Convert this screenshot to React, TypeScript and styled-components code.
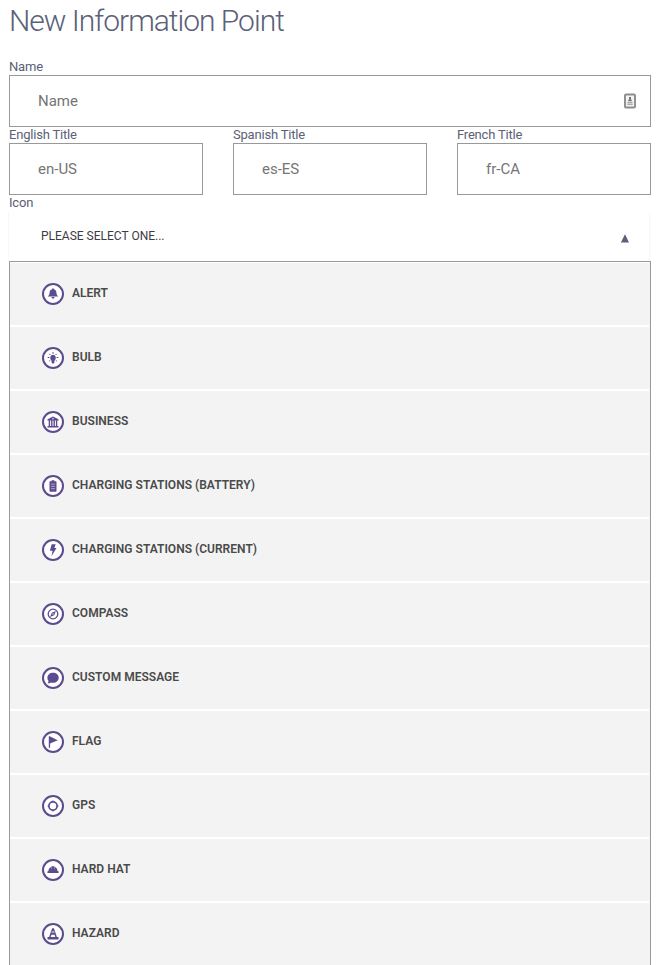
import React from "react";
import styled, { createGlobalStyle } from "styled-components";

const GlobalStyle = createGlobalStyle`
  * { box-sizing: border-box; }
  html, body { margin: 0; background: #fff; overflow: hidden; }
  body { font-family: Roboto, "Liberation Sans", sans-serif; color: #5a6178; }
`;

const Page = styled.main`
  width: 662px;
  height: 965px;
  padding: 0 11px 0 9px;
  overflow: hidden;
`;
const Title = styled.h1`
  margin: 0;
  height: 59px;
  padding-top: 2px;
  font-size: 30px;
  line-height: 38px;
  font-weight: 300;
  letter-spacing: -1px;
  white-space: nowrap;
`;
const Field = styled.label`
  display: block;
  min-width: 0;
`;
const Label = styled.span`
  display: block;
  height: 16px;
  font-size: 13px;
  line-height: 16px;
  letter-spacing: -0.2px;
`;
const InputBox = styled.span`
  display: flex;
  align-items: center;
  height: 52px;
  padding: 0 14px 0 28px;
  border: 1px solid #999;
  background: #fff;
`;
const Input = styled.input`
  flex: 1;
  min-width: 0;
  padding: 0;
  border: 0;
  outline: 0;
  background: transparent;
  font: 400 15px/20px Roboto, sans-serif;
  &::placeholder { color: #757575; opacity: 1; }
`;
const TitleGrid = styled.div`
  display: grid;
  grid-template-columns: repeat(3, 194px);
  column-gap: 30px;
`;
const SelectHeader = styled.div`
  display: flex;
  align-items: center;
  justify-content: space-between;
  height: 50px;
  width: 640px;
  padding: 0 20px 0 32px;
  box-shadow: 0 1px 2px rgba(0, 0, 0, 0.1);
  font-size: 12px;
  color: #3c3c44;
`;
const Arrow = styled.svg`
  display: block;
  margin-top: 5px;
`;
const Options = styled.ul`
  position: relative;
  margin: 0;
  padding: 0 1px 0 0;
  list-style: none;
  border: 1px solid #999;
  background: #f3f3f3;
`;
const Option = styled.li`
  display: flex;
  align-items: center;
  gap: 8px;
  height: 64px;
  padding-left: 32px;
  border-top: 1px solid #fff;
  border-bottom: 1px solid #fff;
  font-size: 12px;
  line-height: 16px;
  font-weight: 600;
  letter-spacing: 0.02px;
  color: #4a4a4a;
`;
const Badge = styled.svg`
  display: block;
  flex: none;
`;
const OptionText = styled.span`
  margin-top: -2px;
`;

const P = "#5c4b8f";
const W = "#fff";

const icons: Record<string, React.ReactNode> = {
  alert: <path fill={P} d="M11 5.3c.6 0 .9.4.9.9 1.700.4 2.400 1.600 2.500 3.300.1 2 .5 2.900 2 4H5.600c1.500-1.100 1.900-2 2-4 .1-1.700.8-2.900 2.500-3.300 0-.5.3-.9.9-.9zM9.500 14.100h3c-.1 1.100-.7 1.700-1.500 1.700s-1.400-.6-1.500-1.700z" />,
  bulb: (
    <>
      <path fill={P} d="M11 7.800a2.900 2.900 0 0 1 1.800 5.100l-.4 1.300H9.600l-.4-1.300A2.900 2.900 0 0 1 11 7.800zM9.600 14.300h2.800v1.500l-.8.800h-1.200l-.8-.8z" />
      <path stroke={P} strokeWidth="1" d="M11 5v1.800M7.300 6.800l1.200 1.200M14.700 6.800l-1.200 1.200M5.700 10.500h1.700M14.600 10.500h1.700M7.200 14.200l1.200-1.200M14.800 14.200l-1.200-1.200" />
    </>
  ),
  business: (
    <>
      <path fill={P} d="M5.500 9.500V8.200L11 5.400l5.500 2.800v1.300zM5.500 15h11v1.600h-11z" />
      <path stroke={P} strokeWidth="1.400" d="M7.400 9v6.200M9.800 9v6.200M12.200 9v6.200M14.600 9v6.200" />
      <circle cx="11" cy="7.700" r=".7" fill={W} />
    </>
  ),
  battery: (
    <>
      <path fill={P} d="M9.600 5.300h2.800v1h1.300q.8 0 .8.800v8.800q0 .8-.8.8H8.300q-.8 0-.8-.8V7.100q0-.8.8-.8h1.300z" />
      <path stroke="#d8d3e6" strokeWidth=".7" d="M9.100 9.100h3.800M9.100 11.400h3.800M9.100 13.700h3.800" />
    </>
  ),
  current: <path fill={P} d="M9.700 5.200h4l-1.400 3.900h2.200L9.500 17.200l1.100-5.500H7.900z" />,
  compass: (
    <>
      <circle cx="11" cy="11" r="4.800" fill="none" stroke={P} strokeWidth="1.300" />
      <path fill={P} d="M13.900 8.100l-1.700 4.100-4.100 1.700 1.700-4.100z" />
      <circle cx="11" cy="11" r=".65" fill={W} />
    </>
  ),
  message: <path fill={P} d="M11.100 5.700c3.300 0 5.600 2.100 5.600 5s-2.300 5-5.600 5c-.8 0-1.500-.1-2.100-.3-1 .7-2.100 1-3.600.9.9-.7 1.200-1.400 1.100-2.200-.7-.9-1.100-2-1.100-3.400 0-2.900 2.400-5 5.700-5z" />,
  flag: <path fill={P} d="M6.800 5.300h.8l8.200 3.900-7.700 3.400v4.100H6.800z" />,
  gps: (
    <>
      <circle cx="11" cy="11" r="4.100" fill="none" stroke={P} strokeWidth="1.700" />
      <path stroke={P} strokeWidth="1.200" d="M11 5.500v1.600M11 14.900v1.600M5.500 11h1.600M14.900 11h1.600" />
    </>
  ),
  hat: (
    <>
      <path fill={P} d="M6.400 12c.1-2.100 1.100-3.500 2.900-4.100l.5-.7h2.400l.5.700c1.800.6 2.800 2 2.900 4.100l1 .6V14H5.400v-1.400z" />
      <path stroke="#d8d3e6" strokeWidth=".4" d="M9.500 8v2.300M12.500 8v2.300" />
    </>
  ),
  hazard: (
    <>
      <path fill={P} d="M10.100 5.300h1.800l3 8.800h1.600v2.300h-11v-2.300h1.600z" />
      <path stroke={W} strokeWidth="1" d="M9.700 9h2.600" />
      <path fill={W} d="M9.400 11.700h3.200l.7 2.400H8.700z" />
    </>
  ),
};

const options = [
  ["alert", "ALERT"],
  ["bulb", "BULB"],
  ["business", "BUSINESS"],
  ["battery", "CHARGING STATIONS (BATTERY)"],
  ["current", "CHARGING STATIONS (CURRENT)"],
  ["compass", "COMPASS"],
  ["message", "CUSTOM MESSAGE"],
  ["flag", "FLAG"],
  ["gps", "GPS"],
  ["hat", "HARD HAT"],
  ["hazard", "HAZARD"],
];

const titles = [
  ["English Title", "en-US"],
  ["Spanish Title", "es-ES"],
  ["French Title", "fr-CA"],
];

const ContactIcon = () => (
  <svg width="12" height="16" viewBox="0 0 12 16">
    <rect x="1" y="1.500" width="10" height="13" rx="1" fill="#f4f4f4" stroke="#8c8c8c" strokeWidth="1.900" />
    <path fill="#777" d="M5 4h2v2.200l1.200 2H3.800l1.200-2z" />
    <path fill="#aaa" d="M3.300 9h5.400v1.200H3.300zM3.300 10.800h5.400V12H3.300z" />
  </svg>
);

export default function App() {
  return (
    <>
      <GlobalStyle />
      <Page>
        <Title>New Information Point</Title>
        <Field>
          <Label>Name</Label>
          <InputBox>
            <Input placeholder="Name" />
            <ContactIcon />
          </InputBox>
        </Field>
        <TitleGrid>
          {titles.map(([label, hint]) => (
            <Field key={label}>
              <Label>{label}</Label>
              <InputBox>
                <Input placeholder={hint} />
              </InputBox>
            </Field>
          ))}
        </TitleGrid>
        <Label>Icon</Label>
        <SelectHeader>
          <span>PLEASE SELECT ONE...</span>
          <Arrow width="9" height="9" viewBox="0 0 9 9">
            <path fill="#5a6178" d="M5 .3L9 8.500H.900z" />
          </Arrow>
        </SelectHeader>
        <Options>
          {options.map(([icon, label]) => (
            <Option key={icon}>
              <Badge width="22" height="22" viewBox="0 0 22 22">
                <circle cx="11" cy="11" r="10" fill={W} stroke={P} strokeWidth="2" />
                {icons[icon]}
              </Badge>
              <OptionText>{label}</OptionText>
            </Option>
          ))}
        </Options>
      </Page>
    </>
  );
}
